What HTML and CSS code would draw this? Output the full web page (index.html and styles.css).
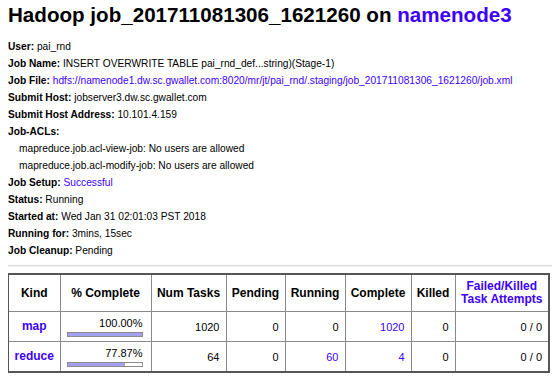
FILE: index.html
```html
<!DOCTYPE HTML>
<html lang="en">
  <head>
  <title>Hadoop job_201711081306_1621260 on namenode3</title>
  <meta charset="utf-8">
  <link rel="stylesheet" href="styles.css">
  </head>

  <body>

  <h1>Hadoop job_201711081306_1621260 on <a href="#">namenode3</a></h1>

  <div class="details">
    <b>User:</b> pai_rnd<br>
    <b>Job Name:</b> INSERT OVERWRITE TABLE pai_rnd_def...string)(Stage-1)<br>
    <b>Job File:</b> <a class="plain" href="#">hdfs://namenode1.dw.sc.gwallet.com:8020/mr/jt/pai_rnd/.staging/job_201711081306_1621260/job.xml</a><br>
    <b>Submit Host:</b> jobserver3.dw.sc.gwallet.com<br>
    <b>Submit Host Address:</b> 10.101.4.159<br>
    <b>Job-ACLs:</b><br>
    <div class="acl">mapreduce.job.acl-view-job: No users are allowed</div>
    <div class="acl">mapreduce.job.acl-modify-job: No users are allowed</div>
    <b>Job Setup:</b> <a class="plain" href="#">Successful</a><br>
    <b>Status:</b> Running<br>
    <b>Started at:</b> Wed Jan 31 02:01:03 PST 2018<br>
    <b>Running for:</b> 3mins, 15sec<br>
    <b>Job Cleanup:</b> Pending<br>
  </div>

  <hr>

  <table class="tasks">
    <colgroup>
      <col class="c-kind">
      <col class="c-pct">
      <col class="c-num">
      <col class="c-pend">
      <col class="c-run">
      <col class="c-comp">
      <col class="c-kill">
      <col class="c-fail">
    </colgroup>
    <tr>
      <th>Kind</th>
      <th>% Complete</th>
      <th>Num Tasks</th>
      <th>Pending</th>
      <th>Running</th>
      <th>Complete</th>
      <th>Killed</th>
      <th><a href="#">Failed/Killed<br>Task Attempts</a></th>
    </tr>
    <tr>
      <th><a href="#">map</a></th>
      <td class="pct">100.00%<div class="bar"><div class="fill" style="width: 100%"></div></div></td>
      <td>1020</td>
      <td>0</td>
      <td>0</td>
      <td><a class="plain" href="#">1020</a></td>
      <td>0</td>
      <td>0 / 0</td>
    </tr>
    <tr>
      <th><a href="#">reduce</a></th>
      <td class="pct">77.87%<div class="bar"><div class="fill" style="width: 77.87%"></div></div></td>
      <td>64</td>
      <td>0</td>
      <td><a class="plain" href="#">60</a></td>
      <td><a class="plain" href="#">4</a></td>
      <td>0</td>
      <td>0 / 0</td>
    </tr>
  </table>

  </body>

</html>
```

FILE: styles.css
```css
html {
  height: 100%;
}
body {
  margin: 2px 8px 0 8px;
  padding: 0;
  background: #ffffff;
  color: #000000;
  font-family: "Liberation Sans", Arial, Helvetica, sans-serif;
  font-size: 10.2px;
  line-height: 17px;
  overflow: hidden;
}

a {
  color: #3d00ff;
  text-decoration: none;
}

h1 {
  font-size: 20.6px;
  line-height: 25px;
  font-weight: bold;
  margin: 0 0 11px 0;
  white-space: nowrap;
}

.details {
  white-space: nowrap;
}

.acl {
  padding-left: 11px;
}

hr {
  border: 0;
  border-top: 1px solid #dcdcdc;
  border-bottom: 1px solid #f2f2f2;
  margin: 6px -8px 6px -1px;
}

.tasks {
  border-collapse: collapse;
  table-layout: fixed;
  width: 541px;
  margin-left: -1px;
  border: 2px solid #555555;
}

.tasks th,
.tasks td {
  border: 1px solid #8a8a8a;
  padding: 5px 6px;
  line-height: 13px;
  white-space: nowrap;
}

.tasks th {
  font-size: 12px;
  font-weight: bold;
  text-align: center;
  padding-left: 2px;
  padding-right: 2px;
}

.tasks td {
  font-size: 11px;
  text-align: right;
  padding-top: 8px;
  padding-bottom: 7px;
}

.tasks td.pct {
  padding: 5px 8px 4px 6px;
}

.c-kind { width: 52px; }
.c-pct { width: 91px; }
.c-num { width: 75px; }
.c-pend { width: 59px; }
.c-run { width: 60px; }
.c-comp { width: 66px; }
.c-kill { width: 44px; }
.c-fail { width: 94px; }

.bar {
  height: 3px;
  margin-top: 2px;
  border: 1px solid #8c8c8c;
  background: #ffffff;
}

.fill {
  height: 100%;
  background: #a4a0f0;
}
```
